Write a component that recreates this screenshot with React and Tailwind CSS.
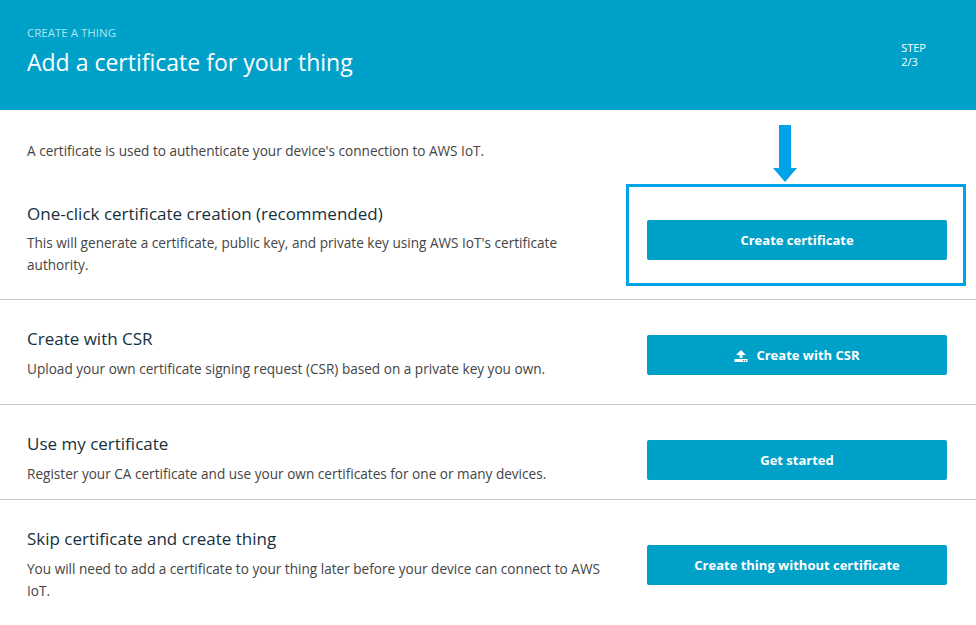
import React from "react";

function UploadIcon() {
  return (
    <svg width="14" height="14" viewBox="0 0 14 14" className="mr-[8px]">
      <path d="M7 1 L12 6 L8.5 6 L8.5 9 L5.5 9 L5.5 6 L2 6 Z" fill="white" />
      <rect x="0.5" y="10" width="13" height="3" fill="white" />
      <rect x="9" y="11" width="1.2" height="1.2" fill="#00a1c9" />
      <rect x="11" y="11" width="1.2" height="1.2" fill="#00a1c9" />
    </svg>
  );
}

function Btn({ children, icon }) {
  return (
    <button className="w-[300px] h-[40px] rounded-[2px] bg-[#00a1c9] text-white text-[13px] font-bold flex items-center justify-center pt-[1px]">
      {icon && <UploadIcon />}
      {children}
    </button>
  );
}

function Section({ title, desc, children, className, btnTop }) {
  return (
    <div className={"flex items-start justify-between border-b border-[#cccccc] pl-[27px] pr-[29px] " + (className || "")}>
      <div className="w-[585px] pt-[28px]">
        <h2 className="text-[17px] leading-[22px] text-[#16313d]">{title}</h2>
        <p className="mt-[8px] text-[13.6px] leading-[22px] text-[#444444]">{desc}</p>
      </div>
      <div className={btnTop}>{children}</div>
    </div>
  );
}

export default function App() {
  return (
    <div className="w-[976px] h-[625px] bg-white overflow-hidden" style={{ fontFamily: "'Open Sans', 'Liberation Sans', sans-serif" }}>
      <div className="h-[110px] bg-[#00a1c9] flex justify-between pl-[27px] pr-[50px]">
        <div className="pt-[26px]">
          <div className="text-[11.5px] leading-[14px] text-[#a6e6f5] uppercase">Create a thing</div>
          <h1 className="mt-[7px] text-[23px] leading-[30px] text-white">Add a certificate for your thing</h1>
        </div>
        <div className="pt-[41px] text-[11px] leading-[14px] text-white">
          <div>STEP</div>
          <div>2/3</div>
        </div>
      </div>

      <div className="h-[190px] border-b border-[#cccccc] pl-[27px] pr-[10px] pt-[30px]">
        <p className="text-[13.6px] leading-[22px] text-[#444444]">
          A certificate is used to authenticate your device's connection to AWS IoT.
        </p>
        <div className="mt-[22px] flex justify-between">
          <div className="w-[565px] pt-[19px]">
            <h2 className="text-[17px] leading-[22px] text-[#16313d]">One-click certificate creation (recommended)</h2>
            <p className="mt-[7px] text-[13.6px] leading-[22px] text-[#444444]">
              This will generate a certificate, public key, and private key using AWS IoT's certificate authority.
            </p>
          </div>
          <div className="relative w-[340px] h-[102px] border-[3px] border-[#00a3e8] flex items-start pl-[18px] pt-[33px]">
            <div className="absolute left-[144px] top-[-62px] flex flex-col items-center">
              <div className="w-[12px] h-[43px] bg-[#00a3e8]"></div>
              <div className="w-0 h-0 border-l-[12px] border-r-[12px] border-t-[14px] border-l-transparent border-r-transparent border-t-[#00a3e8]"></div>
            </div>
            <Btn>Create certificate</Btn>
          </div>
        </div>
      </div>

      <Section className="h-[105px]" btnTop="pt-[35px]" title="Create with CSR" desc="Upload your own certificate signing request (CSR) based on a private key you own.">
        <Btn icon>Create with CSR</Btn>
      </Section>

      <Section className="h-[95px]" btnTop="pt-[35px]" title="Use my certificate" desc="Register your CA certificate and use your own certificates for one or many devices.">
        <Btn>Get started</Btn>
      </Section>

      <Section className="border-b-0" btnTop="pt-[45px]" title="Skip certificate and create thing" desc="You will need to add a certificate to your thing later before your device can connect to AWS IoT.">
        <Btn>Create thing without certificate</Btn>
      </Section>
    </div>
  );
}
